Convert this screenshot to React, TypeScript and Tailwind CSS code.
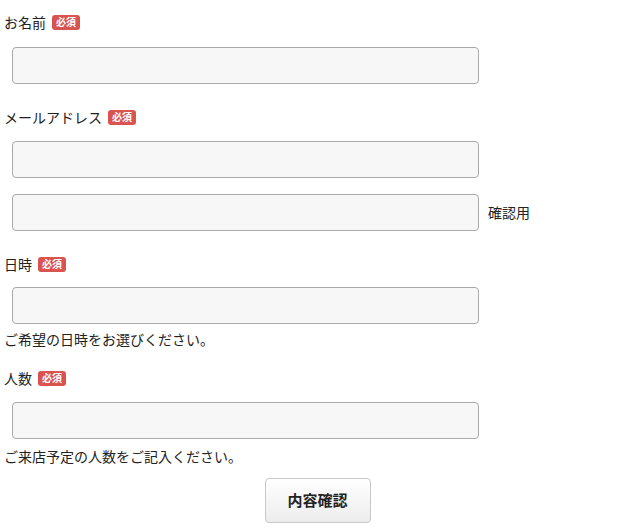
import React from 'react';

const font = { fontFamily: '"Noto Sans CJK JP", "Liberation Sans", sans-serif' };

const Badge: React.FC = () => (
  <span className="ml-[6px] inline-flex h-[15px] items-center rounded-[3px] bg-[#d9534f] px-[4px] text-[10px] font-bold leading-none text-white">
    必須
  </span>
);

const Label: React.FC<{ text: string; className?: string }> = ({ text, className }) => (
  <div className={`flex h-[20px] items-center pl-[4px] text-[14px] text-[#222] ${className ?? ''}`}>
    <span>{text}</span>
    <Badge />
  </div>
);

const Field: React.FC<{ className?: string }> = ({ className }) => (
  <input
    type="text"
    className={`ml-[12px] block h-[37px] w-[467px] rounded-[4px] border border-[#a9a9a9] bg-[#f7f7f7] px-2 outline-none ${className ?? ''}`}
  />
);

const Help: React.FC<{ text: string; className?: string }> = ({ text, className }) => (
  <p className={`h-[20px] pl-[4px] text-[14px] leading-[20px] text-[#222] ${className ?? ''}`}>{text}</p>
);

export default function App() {
  return (
    <div className="min-h-[530px] w-[629px] bg-white" style={font}>
      <form className="flex flex-col pt-[12px]" onSubmit={(e) => e.preventDefault()}>
        {/* お名前 */}
        <Label text="お名前" />
        <Field className="mt-[15px]" />

        {/* メールアドレス */}
        <Label text="メールアドレス" className="mt-[23px]" />
        <Field className="mt-[14px]" />
        <div className="mt-[16px] flex items-center">
          <Field />
          <span className="ml-[9px] text-[14px] text-[#222]">確認用</span>
        </div>

        {/* 日時 */}
        <Label text="日時" className="mt-[23px]" />
        <Field className="mt-[13px]" />
        <Help text="ご希望の日時をお選びください。" className="mt-[5px]" />

        {/* 人数 */}
        <Label text="人数" className="mt-[19px]" />
        <Field className="mt-[14px]" />
        <Help text="ご来店予定の人数をご記入ください。" className="mt-[7px]" />

        <div className="mt-[12px] flex justify-center pl-[6px]">
          <button
            type="submit"
            className="h-[45px] w-[106px] rounded-[4px] border border-[#c8c8c8] bg-gradient-to-b from-white to-[#ececec] text-[15px] font-bold text-[#222]"
          >
            内容確認
          </button>
        </div>
      </form>
    </div>
  );
}
